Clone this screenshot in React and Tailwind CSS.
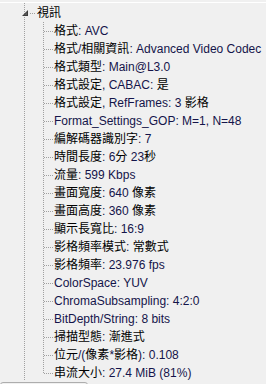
import React from "react";

// media info tree: one parent node with its key/value children
const rows = [
  "格式: AVC",
  "格式/相關資訊: Advanced Video Codec",
  "格式類型: Main@L3.0",
  "格式設定, CABAC: 是",
  "格式設定, RefFrames: 3 影格",
  "Format_Settings_GOP: M=1, N=48",
  "編解碼器識別字: 7",
  "時間長度: 6分 23秒",
  "流量: 599 Kbps",
  "畫面寬度: 640 像素",
  "畫面高度: 360 像素",
  "顯示長寬比: 16:9",
  "影格頻率模式: 常數式",
  "影格頻率: 23.976 fps",
  "ColorSpace: YUV",
  "ChromaSubsampling: 4:2:0",
  "BitDepth/String: 8 bits",
  "掃描型態: 漸進式",
  "位元/(像素*影格): 0.108",
  "串流大小: 27.4 MiB (81%)",
];

// latin text renders navy, CJK black
const Label = ({ text }) => {
  const parts = text.split(/([\u3000-\u9fff\uff00-\uffef]+)/).filter(Boolean);
  return (
    <span className="whitespace-nowrap">
      {parts.map((p, i) =>
        /[\u3000-\u9fff\uff00-\uffef]/.test(p) ? (
          <span key={i} className="text-black">
            {p}
          </span>
        ) : (
          <span key={i} className="text-[#14144a]">
            {p}
          </span>
        )
      )}
    </span>
  );
};

const App = () => {
  return (
    <div
      className="w-[266px] h-[384px] bg-[#f0f0f0] overflow-hidden text-[12px] leading-none"
      style={{ fontFamily: '"Liberation Sans", "Noto Sans CJK TC", sans-serif' }}
    >
      <div className="mt-[2px] h-px bg-white" />

      {/* outer sibling connector */}
      <div className="ml-[24px] h-[377px] border-l border-dotted border-[#a0a0a0] pt-px">
        {/* parent node */}
        <div className="h-[18px] flex items-center -ml-[3px]">
          <svg width="6" height="6" viewBox="0 0 6 6" className="mt-[-1px]">
            <polygon points="6,0 6,6 0,6" fill="#3c3c3c" />
            <polygon points="5,2 5,5 2,5" fill="#5a5a5a" />
          </svg>
          <div className="ml-[2px] w-[5px] border-t border-dotted border-[#a0a0a0] mt-[1px]" />
          <span className="ml-[2px]">
            <Label text="視訊" />
          </span>
        </div>

        {/* children */}
        <div className="ml-[18px] h-[351px] border-l border-dotted border-[#a0a0a0]">
          {rows.map((r, i) => (
            <div key={i} className="h-[18px] flex items-center">
              <div className="w-[9px] border-t border-dotted border-[#a0a0a0] mt-[1px]" />
              <span className="ml-[1px]">
                <Label text={r} />
              </span>
            </div>
          ))}
        </div>
      </div>

      {/* partially visible button at the bottom */}
      <div className="mt-[2px] w-[88px] h-[10px] border border-[#adadad] rounded-[3px] pt-px pl-px">
        <div className="w-[78px] h-[8px] border border-[#f5a623] rounded-[3px]" />
      </div>
    </div>
  );
};

export default App;
